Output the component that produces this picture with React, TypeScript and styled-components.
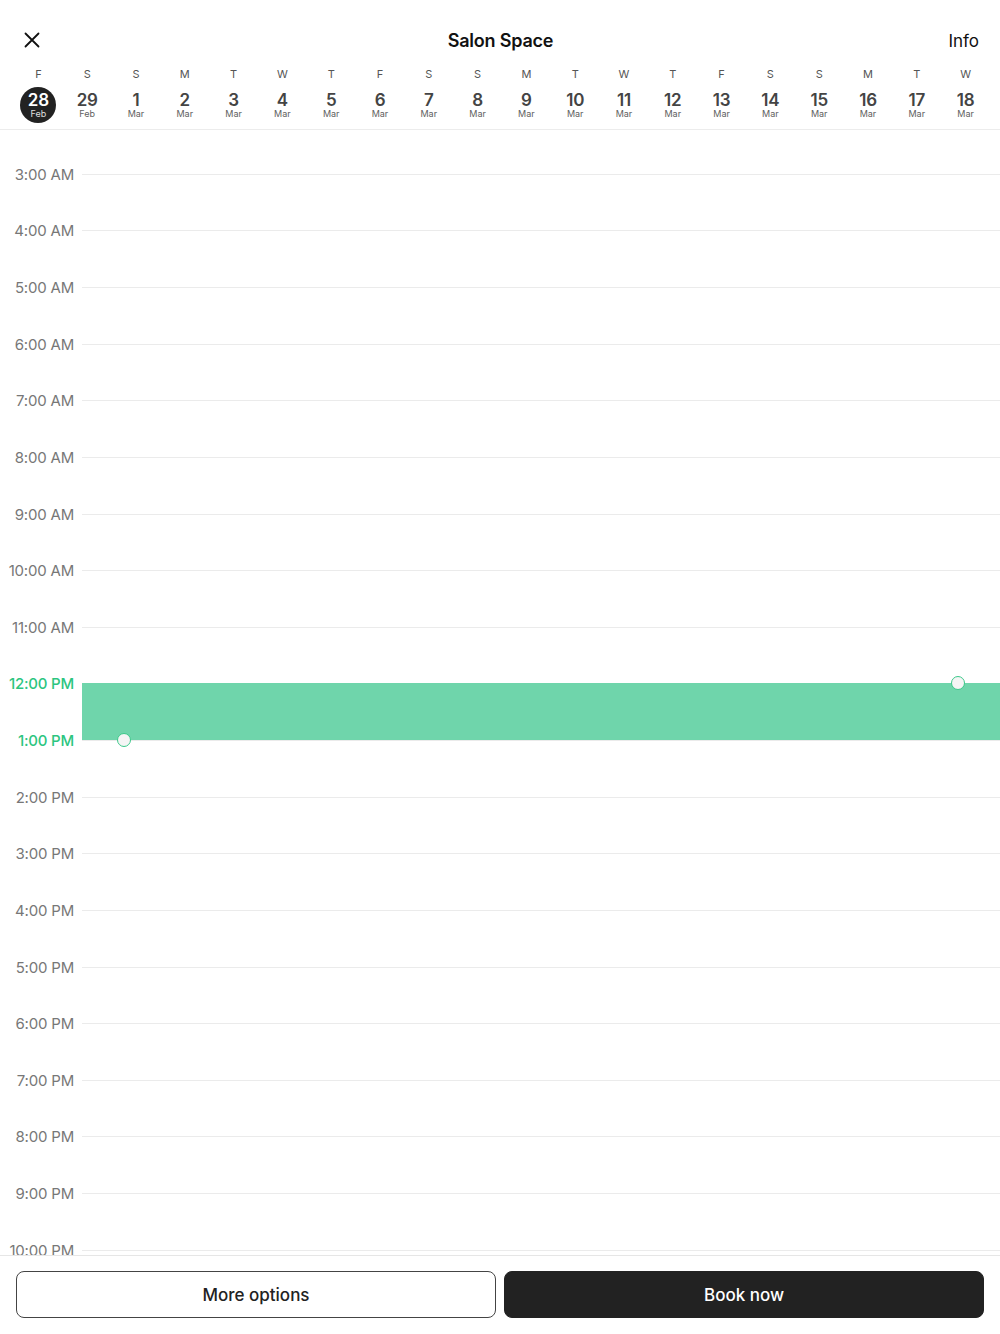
import styled, { createGlobalStyle } from "styled-components";

const GlobalStyle = createGlobalStyle`
  html, body {
    margin: 0;
    padding: 0;
    background: #fff;
    font-family: Inter, "Liberation Sans", sans-serif;
  }
  * { box-sizing: border-box; }
`;

const HOUR = 56.63;

const days = [
  { w: "F", d: "28", m: "Feb" },
  { w: "S", d: "29", m: "Feb" },
  { w: "S", d: "1", m: "Mar" },
  { w: "M", d: "2", m: "Mar" },
  { w: "T", d: "3", m: "Mar" },
  { w: "W", d: "4", m: "Mar" },
  { w: "T", d: "5", m: "Mar" },
  { w: "F", d: "6", m: "Mar" },
  { w: "S", d: "7", m: "Mar" },
  { w: "S", d: "8", m: "Mar" },
  { w: "M", d: "9", m: "Mar" },
  { w: "T", d: "10", m: "Mar" },
  { w: "W", d: "11", m: "Mar" },
  { w: "T", d: "12", m: "Mar" },
  { w: "F", d: "13", m: "Mar" },
  { w: "S", d: "14", m: "Mar" },
  { w: "S", d: "15", m: "Mar" },
  { w: "M", d: "16", m: "Mar" },
  { w: "T", d: "17", m: "Mar" },
  { w: "W", d: "18", m: "Mar" },
];

const hours = [
  "3:00 AM", "4:00 AM", "5:00 AM", "6:00 AM", "7:00 AM", "8:00 AM",
  "9:00 AM", "10:00 AM", "11:00 AM", "12:00 PM", "1:00 PM", "2:00 PM",
  "3:00 PM", "4:00 PM", "5:00 PM", "6:00 PM", "7:00 PM", "8:00 PM",
  "9:00 PM", "10:00 PM", "11:00 PM",
];

const Page = styled.div`
  height: 1334px;
  display: flex;
  flex-direction: column;
  background: #fff;
`;

const Header = styled.header`
  border-bottom: 1px solid #ececec;
  padding-bottom: 6px;
`;

const TopBar = styled.div`
  height: 60px;
  padding: 30px 21px 0 22px;
  display: grid;
  grid-template-columns: 60px 1fr 60px;
  align-items: start;
`;

const CloseButton = styled.button`
  border: none;
  background: none;
  padding: 0;
  width: 20px;
  height: 20px;
  display: flex;
  align-items: center;
  justify-content: center;
  color: #111;
`;

const Title = styled.h1`
  margin: 0;
  text-align: center;
  font-size: 18px;
  line-height: 22px;
  font-weight: 600;
  color: #111;
  letter-spacing: -0.2px;
`;

const InfoLink = styled.a`
  text-align: right;
  font-size: 17px;
  line-height: 22px;
  color: #111;
`;

const DayStrip = styled.div`
  display: grid;
  grid-template-columns: repeat(20, 1fr);
  padding: 0 10px 0 14px;
`;

const Day = styled.div`
  display: flex;
  flex-direction: column;
  align-items: center;
`;

const Weekday = styled.span`
  font-size: 11px;
  color: #555;
  line-height: 14px;
  margin-top: 7px;
`;

const DateBadge = styled.div<{ $active?: boolean }>`
  width: 36px;
  height: 36px;
  margin-top: 6px;
  border-radius: 50%;
  background: ${(p) => (p.$active ? "#222" : "transparent")};
  color: ${(p) => (p.$active ? "#fff" : "#444")};
  display: flex;
  flex-direction: column;
  align-items: center;
  justify-content: center;
`;

const DateNum = styled.span`
  font-size: 17px;
  font-weight: 600;
  line-height: 17px;
  margin-top: 1px;
  letter-spacing: -0.2px;
`;

const Month = styled.span`
  font-size: 9px;
  line-height: 10px;
  opacity: 0.85;
`;

const Schedule = styled.main`
  flex: 1;
  overflow: hidden;
  padding-top: 16px;
`;

const HourRow = styled.div`
  height: ${HOUR}px;
  display: flex;
  align-items: center;
`;

const HourLabel = styled.span<{ $highlight?: boolean }>`
  width: 82px;
  padding-right: 8px;
  text-align: right;
  font-size: 15px;
  letter-spacing: -0.2px;
  color: ${(p) => (p.$highlight ? "#2cc57f" : "#777")};
  font-weight: ${(p) => (p.$highlight ? 500 : 400)};
`;

const HourLine = styled.div`
  flex: 1;
  height: 1px;
  background: #ebebeb;
  position: relative;
`;

const Booking = styled.div`
  position: absolute;
  left: 0;
  right: 0;
  top: 0;
  height: ${HOUR}px;
  background: #6fd5ab;
  z-index: 1;
`;

const Handle = styled.span<{ $x: number; $bottom?: boolean }>`
  position: absolute;
  left: ${(p) => p.$x}px;
  ${(p) => (p.$bottom ? "bottom: -7px;" : "top: -7px;")}
  width: 14px;
  height: 14px;
  border-radius: 50%;
  background: #f5f5f5;
  border: 1.5px solid #3cc98a;
`;

const Footer = styled.footer`
  border-top: 1px solid #e6e6e6;
  padding: 15px 16px 16px;
  display: grid;
  grid-template-columns: 1fr 1fr;
  gap: 8px;
  background: #fff;
`;

const ActionButton = styled.button<{ $primary?: boolean }>`
  height: 47px;
  border-radius: 8px;
  border: 1px solid ${(p) => (p.$primary ? "#222" : "#444")};
  background: ${(p) => (p.$primary ? "#222" : "#fff")};
  color: ${(p) => (p.$primary ? "#fff" : "#222")};
  font-family: inherit;
  font-size: 17px;
  font-weight: 500;
`;

export default function App() {
  return (
    <Page>
      <GlobalStyle />
      <Header>
        <TopBar>
          <CloseButton aria-label="Close">
            <svg width="16" height="16" viewBox="0 0 16 16">
              <path d="M1.5 1.5 L14.5 14.5 M14.5 1.5 L1.5 14.5" stroke="#111" strokeWidth="1.8" strokeLinecap="round" />
            </svg>
          </CloseButton>
          <Title>Salon Space</Title>
          <InfoLink>Info</InfoLink>
        </TopBar>
        <DayStrip>
          {days.map((day, i) => (
            <Day key={i}>
              <Weekday>{day.w}</Weekday>
              <DateBadge $active={i === 0}>
                <DateNum>{day.d}</DateNum>
                <Month>{day.m}</Month>
              </DateBadge>
            </Day>
          ))}
        </DayStrip>
      </Header>
      <Schedule>
        {hours.map((h) => {
          const highlight = h === "12:00 PM" || h === "1:00 PM";
          return (
            <HourRow key={h}>
              <HourLabel $highlight={highlight}>{h}</HourLabel>
              <HourLine>
                {h === "12:00 PM" && (
                  <Booking>
                    <Handle $x={869} />
                    <Handle $x={35} $bottom />
                  </Booking>
                )}
              </HourLine>
            </HourRow>
          );
        })}
      </Schedule>
      <Footer>
        <ActionButton>More options</ActionButton>
        <ActionButton $primary>Book now</ActionButton>
      </Footer>
    </Page>
  );
}
